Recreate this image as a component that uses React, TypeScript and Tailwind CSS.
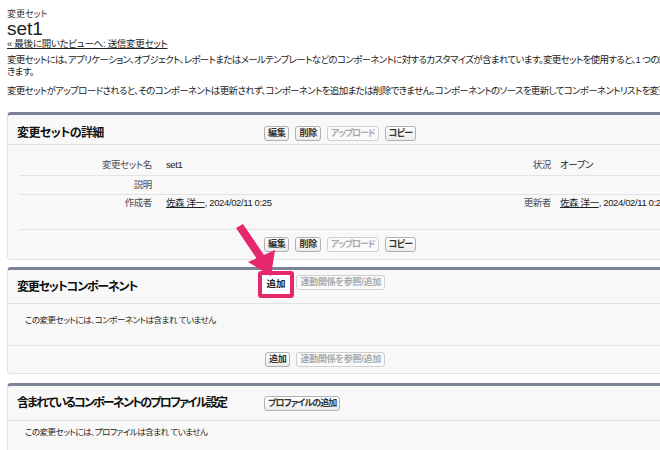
import React from 'react';

const jp = "font-['Liberation_Sans','Noto_Sans_CJK_JP',sans-serif] [font-feature-settings:'palt']";

const Btn: React.FC<{ label: string; disabled?: boolean; className?: string }> = ({ label, disabled, className }) => (
  <span
    className={`inline-flex h-[15px] items-center rounded-[3px] border px-[3px] text-[9px] font-bold leading-none ${
      className ?? 'tracking-[-0.03em]'
    } ${
      disabled
        ? 'border-[#cfcfcf] bg-[#fafafa] text-[#a9a9a9]'
        : 'border-[#b0b0b0] bg-gradient-to-b from-white to-[#ececec] text-[#333]'
    }`}
  >
    {label}
  </span>
);

// 矢印で指している「追加」ボタン (ピンクの枠で強調)
const Highlighted: React.FC<{ label: string }> = ({ label }) => (
  <span className="relative inline-flex">
    <span className="invisible">
      <Btn label={label} />
    </span>
    <span className="absolute -left-[7px] -top-[4px] flex h-[27px] w-[36px] items-center justify-center rounded-[3px] border-[4px] border-[#e5286d] bg-white text-[9.5px] font-bold text-[#222]">
      {label}
    </span>
  </span>
);

const DetailRow: React.FC<{
  l1: string;
  v1?: React.ReactNode;
  l2?: string;
  v2?: React.ReactNode;
  className?: string;
}> = ({ l1, v1, l2, v2, className }) => (
  <div className={`ml-[11px] flex text-[9.5px] leading-[12px] tracking-[-0.04em] ${className ?? ''}`}>
    <div className="w-[147px] pr-[14px] text-right text-[#4a4a56]">{l1}</div>
    <div className="w-[236px] text-[#222]">{v1}</div>
    <div className="w-[158px] pr-[9px] text-right text-[#4a4a56]">{l2}</div>
    <div className="flex-1 whitespace-nowrap text-[#222]">{v2}</div>
  </div>
);

const UserStamp = () => (
  <span>
    <span className="underline">佐森 洋一</span>, 2024/02/11 0:25
  </span>
);

const panel = 'w-[900px] rounded-[4px] border border-t-[3px] border-[#e0e3e5] border-t-[#7b8396] bg-[#f8f8f8]';
const title = 'whitespace-nowrap pl-[9px] text-[12px] font-bold text-[#111]';

const DetailButtons = () => (
  <div className="flex gap-[6px]">
    <Btn label="編集" />
    <Btn label="削除" />
    <Btn label="アップロード" disabled className="tracking-[-0.12em]" />
    <Btn label="コピー" className="tracking-[-0.08em]" />
  </div>
);

export default function App() {
  return (
    <div className={`relative h-[450px] w-[660px] overflow-hidden bg-white text-[#222] ${jp}`}>
      <div className="w-[1000px] pl-[7px] pt-[9px]">
        <div className="text-[9px] leading-[11px] text-[#333]">変更セット</div>
        <div className="font-['Liberation_Sans',sans-serif] text-[19px] leading-[18px] text-[#222]">set1</div>
        <div className="text-[9.5px] leading-[12px] tracking-[-0.03em] text-[#222] underline">« 最後に開いたビューへ: 送信変更セット</div>
        <div className="mt-[4px] whitespace-nowrap text-[9.5px] leading-[12px] tracking-[-0.07em]">
          変更セットには、アプリケーション、オブジェクト、レポートまたはメールテンプレートなどのコンポーネントに対するカスタマイズが含まれています。変更セットを使用すると、1 つの組織から別の組織に移行で
          <br />
          きます。
        </div>
        <div className="mt-[7px] whitespace-nowrap text-[9.5px] leading-[12px] tracking-[-0.07em]">
          変更セットがアップロードされると、そのコンポーネントは更新されず、コンポーネントを追加または削除できません。コンポーネントのソースを更新してコンポーネントリストを変更できます。
        </div>

        {/* 変更セットの詳細 */}
        <div className={`mt-[15px] ${panel}`}>
          <div className="flex h-[30px] items-center border-b border-[#e0e3e5] pt-[7px]">
            <div className={`w-[256px] tracking-[-0.05em] ${title}`}>変更セットの詳細</div>
            <DetailButtons />
          </div>
          <DetailRow
            l1="変更セット名"
            v1="set1"
            l2="状況"
            v2="オープン"
            className="h-[31px] border-b border-[#e3e3e3] pt-[14px]"
          />
          <DetailRow l1="説明" className="h-[19px] items-center border-b border-[#e3e3e3]" />
          <DetailRow
            l1="作成者"
            v1={<UserStamp />}
            l2="更新者"
            v2={<UserStamp />}
            className="h-[35px] border-b border-[#e3e3e3] pt-[2px]"
          />
          <div className="flex h-[29px] items-center pl-[256px]">
            <DetailButtons />
          </div>
        </div>

        {/* 変更セットコンポーネント */}
        <div className={`mt-[7px] ${panel}`}>
          <div className="flex h-[34px] items-center border-b border-[#e0e3e5]">
            <div className={`w-[257px] tracking-[-0.1em] ${title}`}>変更セットコンポーネント</div>
            <div className="flex gap-[6px]">
              <Highlighted label="追加" />
              <Btn label="連動関係を参照/追加" disabled />
            </div>
          </div>
          <div className="h-[42px] border-b border-[#e3e3e3] pl-[17px] pt-[10px] text-[8.5px] leading-[12px] tracking-[-0.06em] text-[#222]">
            この変更セットには、コンポーネントは含まれ ていません
          </div>
          <div className="flex h-[27px] items-center pl-[257px]">
            <div className="flex gap-[6px]">
              <Btn label="追加" />
              <Btn label="連動関係を参照/追加" disabled />
            </div>
          </div>
        </div>

        {/* プロファイル設定 */}
        <div className={`mt-[9px] ${panel}`}>
          <div className="flex h-[35px] items-center border-b border-[#e0e3e5]">
            <div className={`w-[256px] tracking-[-0.15em] ${title}`}>含まれているコンポーネントのプロファイル設定</div>
            <Btn label="プロファイルの追加" className="tracking-[-0.1em]" />
          </div>
          <div className="h-[40px] pl-[17px] pt-[5px] text-[8.5px] leading-[12px] tracking-[-0.06em] text-[#222]">
            この変更セットには、プロファイルは含まれ ていません
          </div>
        </div>
      </div>

      {/* 注目矢印 */}
      <svg className="pointer-events-none absolute left-0 top-0" width="660" height="450">
        <polygon points="236,228 243,224 264,255 257,259" fill="#e5286d" />
        <polygon points="248,262 275,250 271,276" fill="#e5286d" />
      </svg>
    </div>
  );
}
